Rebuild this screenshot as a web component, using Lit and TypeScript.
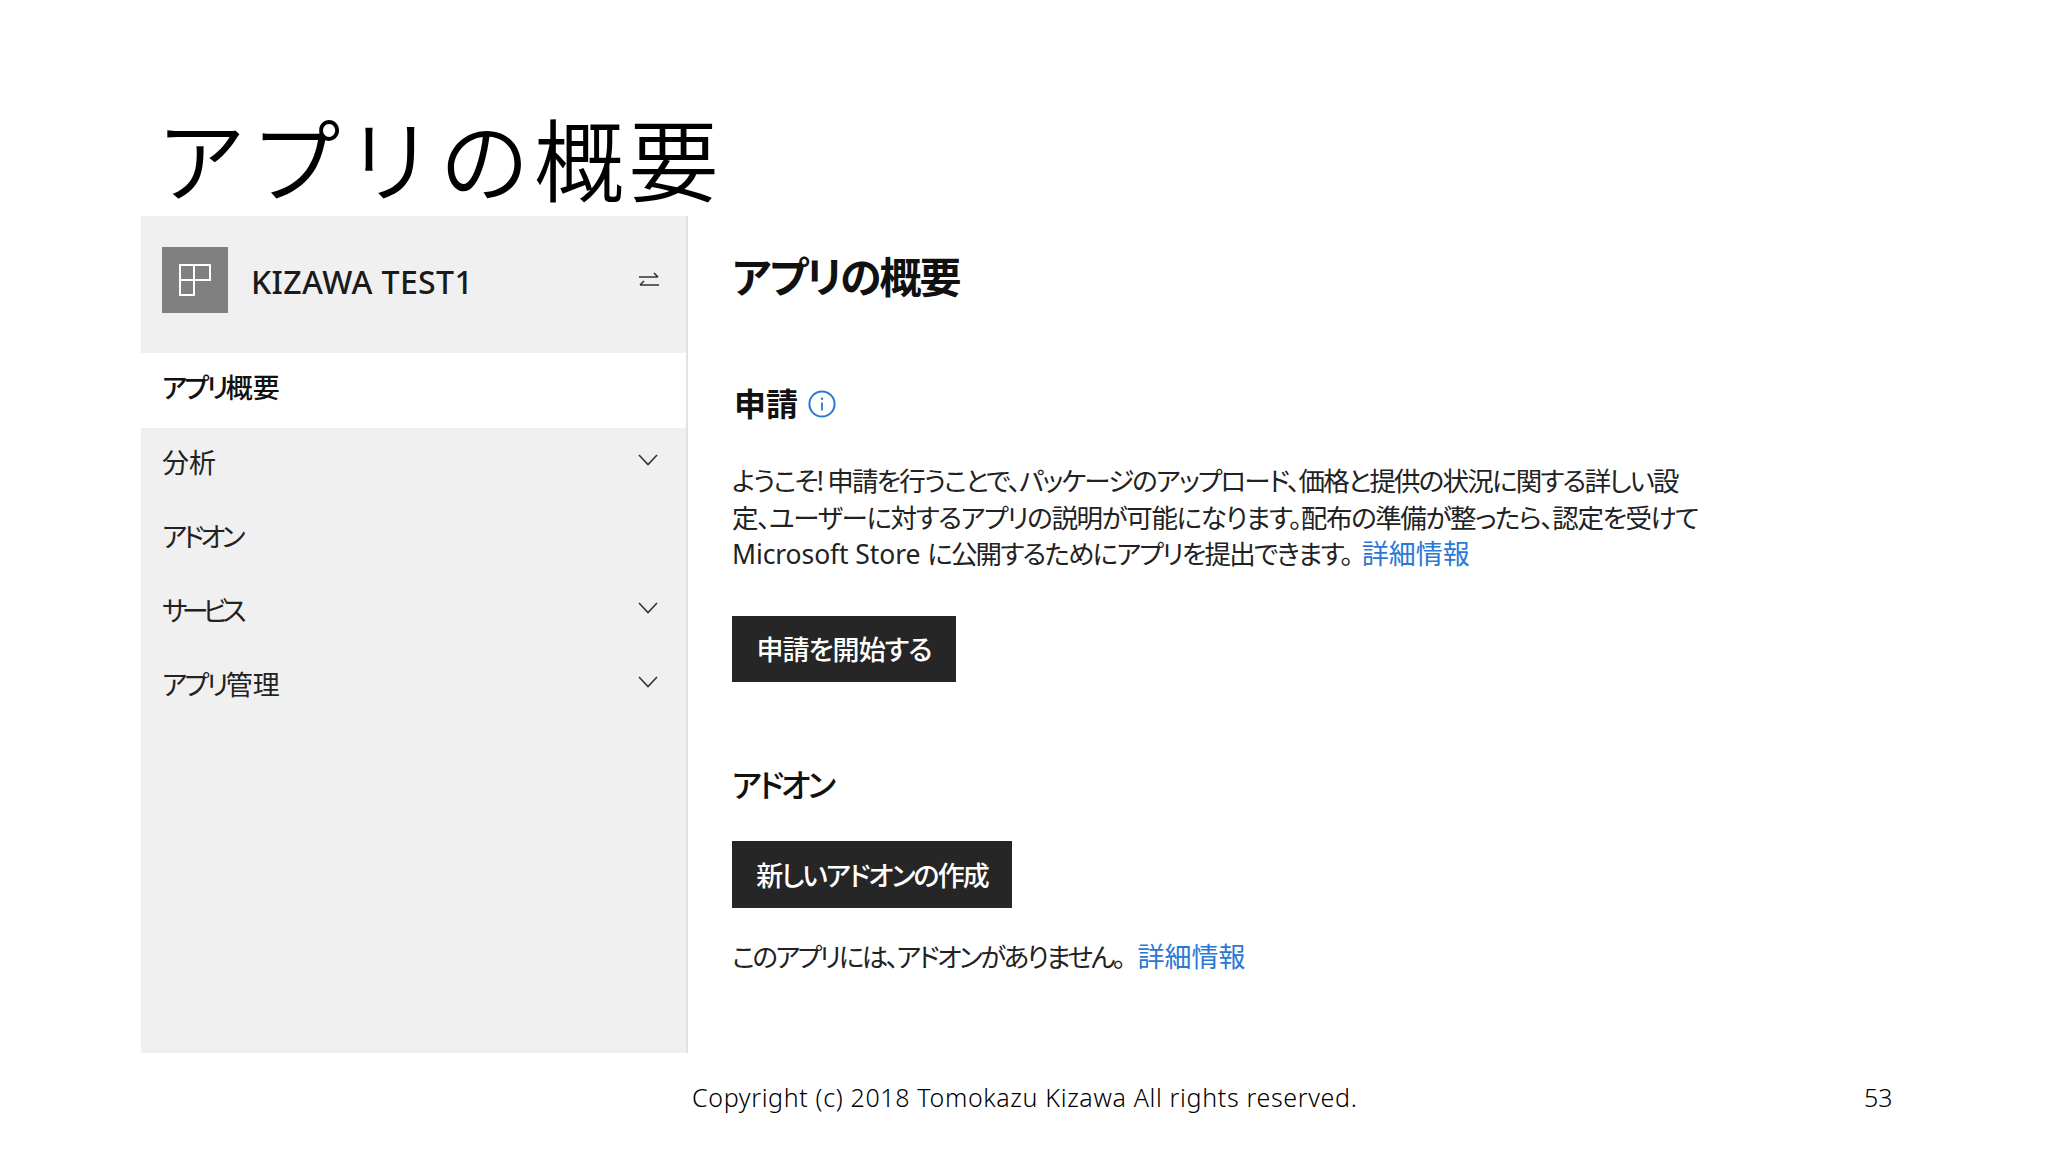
import { LitElement, html, css } from "lit";
import { customElement } from "lit/decorators.js";

const chevron = html`<svg class="chev" viewBox="0 0 20 12" width="20" height="12"><path d="M1 1 L10 10.5 L19 1" fill="none" stroke="#333" stroke-width="1.6"/></svg>`;

@customElement("app-root")
export class AppRoot extends LitElement {
  static styles = css`
    :host { display: block; width: 2048px; height: 1152px; background: #fff; color: #1a1a1a; overflow: hidden;
      font-family: "Noto Sans", "Noto Sans CJK JP", sans-serif; font-feature-settings: "palt"; }
    .slide { display: flex; flex-direction: column; height: 1152px; padding-left: 141px; box-sizing: border-box; }
    .title { height: 216px; box-sizing: border-box; padding: 95px 0 0 15px; margin: 0; font-size: 90px; font-weight: 350; line-height: 130px;
      color: #000; font-feature-settings: normal; letter-spacing: 4.5px; white-space: nowrap; }
    .body { display: flex; height: 837px; }
    .side { width: 547px; flex: none; background: #f0f0f0; border-right: 2px solid #e2e2e2; box-sizing: border-box; display: flex; flex-direction: column; }
    .head { height: 137px; flex: none; display: flex; padding: 31px 26px 0 21px; box-sizing: border-box; align-items: flex-start; }
    .tile { width: 66px; height: 66px; background: #808080; display: flex; align-items: center; justify-content: center; flex: none; }
    .name { margin-left: 23px; font-size: 32px; line-height: 70px; color: #1a1a1a; flex: 1; letter-spacing: 0.4px; font-weight: 500; }
    .swap { margin-top: 24px; }
    .row { height: 74px; flex: none; display: flex; align-items: center; justify-content: space-between; padding: 0 28px 8px 21px; font-size: 27px; color: #222; box-sizing: border-box; }
    .row.active { height: 75px; background: #fff; font-weight: 500; color: #111; }
    .k { letter-spacing: -4px; }
    .k3 { letter-spacing: -5.5px; }
    .k2 { letter-spacing: -2.8px; }
    .chev { margin-top: -2px; }
    .main { flex: 1; padding-left: 44px; display: flex; flex-direction: column; align-items: flex-start; }
    h1 { margin: 0; padding-top: 30px; font-size: 42px; line-height: 62px; font-weight: 700; color: #111; letter-spacing: -2px; }
    h2 { margin: 0; font-weight: 700; font-size: 32px; line-height: 48px; color: #111; display: flex; align-items: center; gap: 10px; }
    h2.sub { margin-top: 72px; padding-left: 2px; }
    h2.addon { margin-top: 79px; font-weight: 500; letter-spacing: -3px; }
    .para { margin: 35px 0 0; font-size: 26.5px; line-height: 36.5px; color: #222; white-space: nowrap; }
    .l1 { letter-spacing: -1.8px; }
    .l2 { letter-spacing: -1.38px; }
    .l3 { letter-spacing: -1.78px; }
    .latin { letter-spacing: -0.1px; }
    .gap { margin-left: 10px; }
    .gap2 { margin-left: 14px; }
    a { color: #2b78d4; text-decoration: none; font-size: 27px; letter-spacing: 0; }
    .btn { background: #262626; color: #fff; display: flex; align-items: center; justify-content: center; font-size: 27px; font-weight: 500; box-sizing: border-box; }
    .b1 { width: 224px; height: 66px; margin-top: 43px; letter-spacing: -0.9px; }
    .b2 { width: 280px; height: 67px; margin-top: 32px; letter-spacing: -1.9px; }
    .line { margin-top: 31px; font-size: 26.5px; line-height: 36px; color: #222; white-space: nowrap; letter-spacing: -2.5px; }
    .foot { position: relative; flex: 1; font-size: 25px; color: #000; }
    .copy { position: absolute; left: 551px; top: 26px; line-height: 36px; letter-spacing: 0.65px; white-space: nowrap; font-weight: 300; }
    .page { position: absolute; left: 1723px; top: 26px; line-height: 36px; font-weight: 300; }
  `;

  render() {
    return html`<div class="slide">
      <div class="title">アプリの概要</div>
      <div class="body">
        <nav class="side">
          <div class="head">
            <div class="tile">
              <svg width="32" height="32" viewBox="0 0 32 32" fill="none" stroke="#fff" stroke-width="2"><path d="M1 1H31V16H1ZM1 16H15V31H1ZM15 1V16"/></svg>
            </div>
            <div class="name">KIZAWA TEST1</div>
            <svg class="swap" width="22" height="20" viewBox="0 0 22 20" fill="none" stroke="#333" stroke-width="1.6"><path d="M1 6H20M16 2L20 6M21 14H2M6 10L2 14"/></svg>
          </div>
          <div class="row active"><span><span class="k2">アプリ</span>概要</span></div>
          <div class="row"><span>分析</span>${chevron}</div>
          <div class="row"><span class="k">アドオン</span></div>
          <div class="row"><span class="k3">サービス</span>${chevron}</div>
          <div class="row"><span><span class="k2">アプリ</span>管理</span>${chevron}</div>
        </nav>
        <main class="main">
          <h1>アプリの概要</h1>
          <h2 class="sub">申請
            <svg width="28" height="28" viewBox="0 0 28 28"><circle cx="14" cy="14" r="12.6" fill="none" stroke="#2b78d4" stroke-width="2"/><path d="M14 12.5V20.5" stroke="#2b78d4" stroke-width="1.8"/><circle cx="14" cy="8.7" r="1.2" fill="#2b78d4"/></svg>
          </h2>
          <div class="para"><span class="l1">ようこそ! 申請を行うことで、パッケージのアップロード、価格と提供の状況に関する詳しい設</span><br><span class="l2">定、ユーザーに対するアプリの説明が可能になります。配布の準備が整ったら、認定を受けて</span><br><span class="latin">Microsoft Store </span><span class="l3">に公開するためにアプリを提出できます。</span><a class="gap">詳細情報</a></div>
          <div class="btn b1">申請を開始する</div>
          <h2 class="addon">アドオン</h2>
          <div class="btn b2">新しいアドオンの作成</div>
          <div class="line">このアプリには、アドオンがありません。<a class="gap2">詳細情報</a></div>
        </main>
      </div>
      <div class="foot">
        <span class="copy">Copyright (c) 2018 Tomokazu Kizawa All rights reserved.</span>
        <span class="page">53</span>
      </div>
    </div>`;
  }
}
